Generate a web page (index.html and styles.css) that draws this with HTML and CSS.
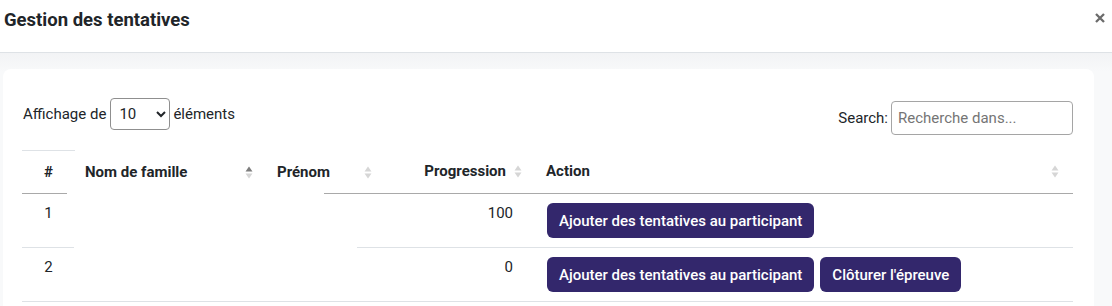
FILE: index.html
```html
<!DOCTYPE html>
<html lang="fr">
<head>
  <meta charset="UTF-8">
  <meta name="viewport" content="width=device-width, initial-scale=1.0">
  <title>Gestion des tentatives</title>
  <link rel="stylesheet" href="styles.css">
</head>
<body>
  <div class="modal">
    <div class="modal-header">
      <h5 class="modal-title">Gestion des tentatives</h5>
      <button class="close" type="button" aria-label="Fermer">
        <svg width="10" height="10" viewBox="0 0 10 10"><path d="M1 1L9 9M9 1L1 9" stroke="#6b6b6b" stroke-width="2.3" stroke-linecap="butt"/></svg>
      </button>
    </div>
    <div class="modal-body">
      <div class="card">
        <div class="dt-top">
          <label class="dt-length">Affichage de
            <select>
              <option>10</option>
              <option>25</option>
              <option>50</option>
              <option>100</option>
            </select>
            éléments
          </label>
          <label class="dt-search">Search:
            <input type="search" placeholder="Recherche dans...">
          </label>
        </div>

        <table class="dt-table">
          <colgroup>
            <col style="width:53px">
            <col style="width:192px">
            <col style="width:119px">
            <col style="width:150px">
            <col>
          </colgroup>
          <thead>
            <tr>
              <th class="col-id cut-left">#</th>
              <th class="no-line"><div class="th-inner"><span>Nom de famille</span><span class="sort asc"><svg width="8" height="13" viewBox="0 0 8 13"><path class="up" d="M0.5 5.5L4 0.5L7.5 5.5Z"/><path class="down" d="M0.5 7.5L4 12.5L7.5 7.5Z"/></svg></span></div></th>
              <th class="cut-right-head"><div class="th-inner"><span>Prénom</span><span class="sort"><svg width="8" height="13" viewBox="0 0 8 13"><path class="up" d="M0.5 5.5L4 0.5L7.5 5.5Z"/><path class="down" d="M0.5 7.5L4 12.5L7.5 7.5Z"/></svg></span></div></th>
              <th class="line"><div class="th-inner end"><span>Progression</span><span class="sort"><svg width="8" height="13" viewBox="0 0 8 13"><path class="up" d="M0.5 5.5L4 0.5L7.5 5.5Z"/><path class="down" d="M0.5 7.5L4 12.5L7.5 7.5Z"/></svg></span></div></th>
              <th class="line"><div class="th-inner"><span>Action</span><span class="sort"><svg width="8" height="13" viewBox="0 0 8 13"><path class="up" d="M0.5 5.5L4 0.5L7.5 5.5Z"/><path class="down" d="M0.5 7.5L4 12.5L7.5 7.5Z"/></svg></span></div></th>
            </tr>
          </thead>
          <tbody>
            <tr>
              <td class="col-id cut-id">1</td>
              <td class="no-line"></td>
              <td class="cut-right-row"></td>
              <td class="num line">100</td>
              <td class="action line">
                <div class="actions">
                  <button class="btn" type="button">Ajouter des tentatives au participant</button>
                </div>
              </td>
            </tr>
            <tr>
              <td class="col-id line">2</td>
              <td class="line"></td>
              <td class="line"></td>
              <td class="num line">0</td>
              <td class="action line">
                <div class="actions">
                  <button class="btn" type="button">Ajouter des tentatives au participant</button>
                  <button class="btn" type="button">Clôturer l'épreuve</button>
                </div>
              </td>
            </tr>
          </tbody>
        </table>
      </div>
    </div>
  </div>
</body>
</html>
```

FILE: styles.css
```css
* {
  box-sizing: border-box;
}

body {
  margin: 0;
  width: 1112px;
  height: 306px;
  overflow: hidden;
  font-family: Roboto, "Liberation Sans", Arial, sans-serif;
  font-size: 15px;
  color: #212529;
  background: #fff;
}

.modal {
  display: flex;
  flex-direction: column;
  height: 306px;
}

.modal-header {
  display: flex;
  justify-content: space-between;
  align-items: flex-start;
  height: 53px;
  padding: 9px 4px 0 4px;
  border-bottom: 1px solid #dee2e6;
  background: #fff;
}

.modal-title {
  margin: 0;
  font-size: 18.5px;
  font-weight: 700;
  line-height: 22px;
  color: #212529;
}

.close {
  border: none;
  background: none;
  padding: 0;
  margin: 4px 3px 0 0;
  width: 10px;
  height: 10px;
  cursor: pointer;
}

.close svg {
  display: block;
}

.modal-body {
  flex: 1;
  padding: 16px 18px 0 3px;
  background: linear-gradient(#f2f3f5, #f8f9fa 18px);
}

.card {
  background: #fff;
  border-radius: 8px 8px 0 0;
  padding: 29px 21px 0 19px;
  height: 100%;
}

.dt-top {
  display: flex;
  justify-content: space-between;
  align-items: flex-start;
  margin-bottom: 15px;
}

.dt-length {
  display: flex;
  align-items: center;
  gap: 4px;
  height: 32px;
  padding-left: 1px;
}

.dt-length select {
  width: 60px;
  height: 32px;
  margin-right: -1px;
  padding: 0 4px;
  font-family: Roboto, "Liberation Sans", Arial, sans-serif;
  font-size: 15px;
  color: #212529;
  background: #fff;
  border: 1px solid #8f8f8f;
  border-radius: 4px;
}

.dt-search {
  display: flex;
  align-items: center;
  gap: 3px;
  margin-top: 3px;
}

.dt-search input {
  width: 182px;
  height: 34px;
  padding: 0 6px;
  font-family: Roboto, "Liberation Sans", Arial, sans-serif;
  font-size: 15px;
  color: #212529;
  border: 1px solid #a5a5a5;
  border-radius: 4px;
  outline: none;
}

.dt-search input::placeholder {
  color: #757575;
}

.dt-table {
  width: 1051px;
  border-collapse: separate;
  border-spacing: 0;
  table-layout: fixed;
}

.dt-table th {
  height: 43px;
  padding: 11px 14px 11px 10px;
  text-align: left;
  font-weight: 700;
  line-height: 21px;
}

.dt-table th.col-id {
  padding: 11px 10px;
  text-align: center;
  border-top: 1px solid #dee2e6;
}

.th-inner {
  display: flex;
  justify-content: space-between;
  align-items: center;
}

.th-inner.end {
  justify-content: flex-end;
  gap: 8px;
}

.sort svg {
  display: block;
}

.sort .up,
.sort .down {
  fill: #d6d6d6;
}

.sort.asc .up {
  fill: #7d7d7d;
}

.dt-table td {
  height: 54px;
  padding: 9px 10px;
  vertical-align: top;
  line-height: 21px;
}

.dt-table tbody tr:last-child td {
  height: 52px;
}

.dt-table td.col-id {
  text-align: center;
}

.dt-table td.num {
  text-align: right;
  padding-right: 23px;
}

.dt-table td.action {
  padding-left: 11px;
}

/* row lines */
thead th.line {
  border-bottom: 1px solid #a9a9a9;
}

tbody td.line {
  border-bottom: 1px solid #dee2e6;
}

thead th.cut-left {
  background: linear-gradient(#a9a9a9, #a9a9a9) left bottom / 45px 1px no-repeat;
}

thead th.cut-right-head {
  background: linear-gradient(#a9a9a9, #a9a9a9) right bottom / 62px 1px no-repeat;
}

tbody td.cut-id {
  background: linear-gradient(#dee2e6, #dee2e6) left bottom / 52px 1px no-repeat;
}

tbody td.cut-right-row {
  background: linear-gradient(#dee2e6, #dee2e6) right bottom / 29px 1px no-repeat;
}

.actions {
  display: flex;
  gap: 6px;
}

.btn {
  height: 35px;
  padding: 0 12px;
  font-family: Roboto, "Liberation Sans", Arial, sans-serif;
  font-size: 15px;
  font-weight: 500;
  color: #fff;
  background-color: #33276c;
  border: none;
  border-radius: 6px;
  cursor: pointer;
  white-space: nowrap;
}

.btn:hover {
  background-color: #281e57;
}
```
